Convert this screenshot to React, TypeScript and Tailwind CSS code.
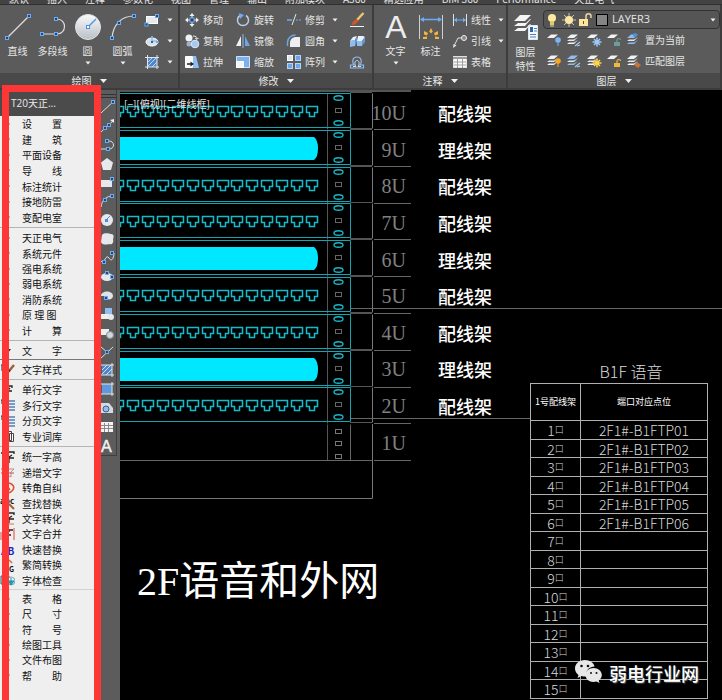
import type { ReactNode } from 'react';

const TABS = ['默认', '插入', '注释', '参数化', '视图', '管理', '输出', '附加模块', 'A360', '精选应用', 'BIM 360', 'Performance', '天正电气'];

interface MenuGroup {
  height: string;
  items: string[];
  marks?: string[];
  divider?: 'normal' | 'tight' | 'dark';
}

const MENU: MenuGroup[] = [
  { height: 'h-[109px]', items: ['设　　置', '建　　筑', '平面设备', '导　　线', '标注统计', '接地防雷', '变配电室'], divider: 'normal' },
  { height: 'h-[108px]', items: ['天正电气', '系统元件', '强电系统', '弱电系统', '消防系统', '原 理 图', '计　　算'], divider: 'normal' },
  { height: 'h-[15px]', items: ['文　　字'], marks: ['open'], divider: 'dark' },
  { height: 'h-4', items: ['文字样式'], marks: ['brush'], divider: 'normal' },
  { height: 'h-[62px]', items: ['单行文字', '多行文字', '分页文字', '专业词库'], marks: ['char', 'lines', 'lines', 'pages'], divider: 'normal' },
  {
    height: 'h-[139px]',
    items: ['统一字高', '递增文字', '转角自纠', '查找替换', '文字转化', '文字合并', '快速替换', '繁简转换', '字体检查'],
    marks: ['height', 'increase', 'rotate', 'find', 'convert', 'merge', 'replace', 'swap', 'check'],
    divider: 'tight',
  },
  { height: 'h-[92px]', items: ['表　　格', '尺　　寸', '符　　号', '绘图工具', '文件布图', '帮　　助'] },
];

type RowKind = 'ports' | 'bar' | 'empty';

const RACK: { unit: string; kind: RowKind; label: string }[] = [
  { unit: '10U', kind: 'ports', label: '配线架' },
  { unit: '9U', kind: 'bar', label: '理线架' },
  { unit: '8U', kind: 'ports', label: '配线架' },
  { unit: '7U', kind: 'ports', label: '配线架' },
  { unit: '6U', kind: 'bar', label: '理线架' },
  { unit: '5U', kind: 'ports', label: '配线架' },
  { unit: '4U', kind: 'ports', label: '配线架' },
  { unit: '3U', kind: 'bar', label: '理线架' },
  { unit: '2U', kind: 'ports', label: '配线架' },
  { unit: '1U', kind: 'empty', label: '' },
];

const PORTS = ['2F1#-B1FTP01', '2F1#-B1FTP02', '2F1#-B1FTP03', '2F1#-B1FTP04', '2F1#-B1FTP05', '2F1#-B1FTP06'];

/* ---------- icons ---------- */

const Dot = ({ x, y }: { x: number; y: number }) => (
  <rect x={x - 1.5} y={y - 1.5} width="3" height="3" fill="#24466f" stroke="#6cabf5" />
);

const Icon = ({ w = 16, h = 16, children }: { w?: number; h?: number; children: ReactNode }) => (
  <svg width={w} height={h} viewBox={`0 0 ${w} ${h}`} fill="none" className="shrink-0" aria-hidden="true">
    {children}
  </svg>
);

const Caret = () => (
  <svg width="6" height="4" viewBox="0 0 6 4" className="shrink-0" aria-hidden="true">
    <path d="M0.5 0.5h5L3 3.5z" fill="#f0f0f0" />
  </svg>
);

const LineIcon = () => (
  <Icon w={28} h={28}>
    <path d="M3 25L25 3" stroke="#dcdcdc" strokeWidth="1.2" />
    <Dot x={3} y={25} />
    <Dot x={25} y={3} />
  </Icon>
);

const PolylineIcon = () => (
  <Icon w={28} h={28}>
    <path d="M3 21h15c10 0 10-15 0-15" stroke="#dcdcdc" strokeWidth="1.2" />
    <Dot x={3} y={21} />
    <Dot x={17} y={21} />
    <Dot x={17} y={6} />
  </Icon>
);

const CircleIcon = () => (
  <Icon w={28} h={28}>
    <defs>
      <linearGradient id="disc" x1="0" y1="0" x2="0" y2="1">
        <stop offset="0" stopColor="#fafafa" />
        <stop offset="1" stopColor="#b9bfc8" />
      </linearGradient>
    </defs>
    <circle cx="14" cy="14" r="12.5" fill="url(#disc)" stroke="#e4e4e4" />
    <path d="M14 14l8-8" stroke="#4a90e2" strokeWidth="1.2" />
    <rect x="12.5" y="12.5" width="3" height="3" fill="#fff" stroke="#4a90e2" />
  </Icon>
);

const ArcIcon = () => (
  <Icon w={28} h={28}>
    <path d="M3 25C4 12 12 3 25 3" stroke="#dcdcdc" strokeWidth="1.2" />
    <Dot x={3} y={25} />
    <Dot x={10} y={10} />
    <Dot x={25} y={3} />
  </Icon>
);

const RectIcon = () => (
  <Icon>
    <rect x="2.5" y="4.5" width="11" height="7" fill="#e6e9ee" stroke="#fff" />
    <Dot x={2.5} y={12.5} />
    <Dot x={13} y={4} />
  </Icon>
);

const EllipseIcon = () => (
  <Icon>
    <ellipse cx="8" cy="9" rx="6" ry="4" fill="#d9dfe8" stroke="#fff" />
    <path d="M8 4v4h5" stroke="#6cabf5" />
    <rect x="7" y="8" width="2" height="2" fill="#2f62a8" />
    <rect x="7" y="3" width="2" height="2" fill="#6cabf5" />
    <rect x="12" y="8" width="2" height="2" fill="#6cabf5" />
  </Icon>
);

const HatchIcon = () => (
  <Icon>
    <rect x="4" y="4" width="9" height="9" fill="#4f86c8" />
    <path d="M4 8l4-4M4 12l8-8M8 13l5-5" stroke="#bcd8ff" />
    <path d="M3.5 1v14M13 1v14M1 3.5h14M1 13h14" stroke="#dfe6ef" />
  </Icon>
);

const MoveIcon = () => (
  <Icon>
    <path d="M8 1l2.5 3h-5zM8 15l2.5-3h-5zM1 8l3-2.5v5zM15 8l-3-2.5v5z" fill="#f2f2f2" />
    <path d="M8 3v10M3 8h10" stroke="#f2f2f2" />
    <rect x="6" y="6" width="4" height="4" fill="#24466f" stroke="#6cabf5" />
  </Icon>
);

const CopyIcon = () => (
  <Icon>
    <circle cx="5" cy="5" r="3.5" fill="#f0f2f5" />
    <circle cx="5" cy="11" r="2.5" fill="#9fb5cf" />
    <circle cx="11" cy="11" r="3.8" fill="#a8c8ee" stroke="#dceaff" />
    <path d="M9 3c3 0 4 1 4 3M11 5l2 1.5L14.500 5" stroke="#e8e8e8" />
  </Icon>
);

const StretchIcon = () => (
  <Icon>
    <path d="M9 2h3l3 12H9z" fill="#8fbdf0" />
    <path d="M1.5 2.5h7v11h-7z" fill="#fafafa" stroke="#fff" />
    <path d="M3 10h4" stroke="#222" strokeWidth="1.5" />
    <path d="M6.5 7.5L10 10l-3.500 2.5z" fill="#222" />
  </Icon>
);

const RotateIcon = () => (
  <Icon>
    <path d="M11 3.5A5.5 5.5 0 1 1 5 3.5" stroke="#b9cfe8" strokeWidth="1.5" />
    <path d="M4 1l5 2-4 4z" fill="#6cabf5" />
  </Icon>
);

const MirrorIcon = () => (
  <Icon>
    <path d="M6 3v10H1z" fill="#f2f2f2" />
    <path d="M10 3v10h5z" fill="#6ca6e6" />
    <path d="M8 1v14" stroke="#8fbdf0" />
  </Icon>
);

const ScaleIcon = () => (
  <Icon>
    <path d="M1.5 2.5h13v11h-13z" fill="#7eb1ec" stroke="#cfe2fa" />
    <path d="M1.5 7.5h7v6h-7z" fill="#f4f4f4" stroke="#fff" />
  </Icon>
);

const TrimIcon = () => (
  <Icon>
    <path d="M1 8h5" stroke="#6cabf5" strokeWidth="1.5" />
    <path d="M10 8h5" stroke="#6cabf5" strokeDasharray="2 1" />
    <path d="M6 13L10 2" stroke="#e6e6e6" />
  </Icon>
);

const FilletIcon = () => (
  <Icon>
    <path d="M4 14V10c0-4 3-6 6-6h4v10z" fill="#eceef2" />
    <path d="M1.5 13V9c1-5 4-7 8-7" stroke="#6ca6e6" strokeWidth="1.5" />
  </Icon>
);

const ArrayIcon = () => (
  <Icon>
    <rect x="1.5" y="1.5" width="5" height="5" fill="#dfe6f0" stroke="#fff" />
    <rect x="9.5" y="1.5" width="5" height="5" fill="#6ca6e6" stroke="#b5d3f8" />
    <rect x="1.5" y="9.5" width="5" height="5" fill="#6ca6e6" stroke="#b5d3f8" />
    <rect x="9.5" y="9.5" width="5" height="5" fill="#6ca6e6" stroke="#b5d3f8" />
  </Icon>
);

const EraseIcon = () => (
  <Icon>
    <path d="M14.5 1L8 8" stroke="#f0c46a" strokeWidth="2.5" />
    <path d="M8 7l1.5 2L6 12.500 2.500 13 4 9.500z" fill="#d9552a" />
    <path d="M1 14.5h14" stroke="#f0f0f0" />
  </Icon>
);

const ExplodeIcon = () => (
  <Icon>
    <path d="M1 8l5-1v6l-5 1zM8 8h5v5H8z" fill="#8fbdf0" />
    <path d="M1 8l3-4 4-1-2 4zM8 8l1-5h5l2 1-3 4z" fill="#e8f1fc" />
    <path d="M6 7l2-4v6l-2 4zM13 8l3-4v5l-3 4z" fill="#6897cc" />
  </Icon>
);

const OffsetIcon = () => (
  <Icon>
    <path d="M1.5 14h13v-3h-3.500c2-2 2-8-3-8s-5 6-3 8H1.500z" stroke="#8fbdf0" strokeWidth="1.2" />
    <path d="M4 12.5h3c-2-3-1-6 1-6s3 3 1 6h3" stroke="#cfe2fa" />
  </Icon>
);

const DimIcon = () => (
  <Icon w={26} h={28}>
    <path d="M1.5 2v24M24.500 2v24" stroke="#cfcfcf" />
    <path d="M3 6.5h20" stroke="#6cabf5" strokeWidth="1.5" />
    <path d="M2 6.5l4-2.500v5zM24 6.500L20 4v5z" fill="#6cabf5" />
    <path d="M13 15l1.800 3.500-1.800 2-1.800-2zM6 18l4 2-1 2.500-3-1zM20 18l-4 2 1 2.500 3-1zM5 24l4-.5v2.500H5zM21 24l-4-.5v2.500h4z" fill="#f3b63a" />
  </Icon>
);

const LinearIcon = () => (
  <Icon>
    <path d="M1.5 2v12M14.500 2v12" stroke="#e0e0e0" />
    <path d="M2 8h12" stroke="#6cabf5" />
    <path d="M2 8l3-2.500v5zM14 8l-3-2.500v5z" fill="#6cabf5" />
  </Icon>
);

const LeaderIcon = () => (
  <Icon>
    <path d="M2 13L6 5h4" stroke="#e0e0e0" />
    <path d="M1 15l.5-4 3 1.500z" fill="#e0e0e0" />
    <circle cx="12" cy="5" r="2.5" fill="#888" stroke="#f0f0f0" />
  </Icon>
);

const TableIcon = () => (
  <Icon>
    <rect x="1.5" y="2.5" width="13" height="11" fill="#fafafa" stroke="#e0e0e0" />
    <path d="M1 4h14" stroke="#9a9a9a" strokeWidth="2" />
    <path d="M5.5 4v10M10.500 4v10M2 8h12M2 11h12" stroke="#a0a0a0" />
  </Icon>
);

const LayersIcon = () => (
  <Icon w={26} h={28}>
    <path d="M1 8l6-6h11l-6 6zM1 13l4-3h8l4-4h1l-6 7zM1 18l4-3h8l4-4h1l-6 7z" fill="#f4f4f4" />
    <path d="M15.5 12.500h9v14h-9z" fill="#f6f8fb" stroke="#e0e6ee" />
    <path d="M17 14h3v5h-3z" fill="#2f62a8" />
    <path d="M21 15.500h3M21 18h3M17 21.500h6M17 24h6" stroke="#4d7fc0" />
  </Icon>
);

/* sheet stack with a badge in the lower right corner */
const LayerTool = ({ sheets, fill = '#f2f2f2', badge }: { sheets: number; fill?: string; badge: ReactNode }) => (
  <Icon>
    <path d="M1 6l4-3.5h7L8 6z" fill={fill} />
    {sheets > 1 && <path d="M1 9l2-1.500h5L12 5 8 9z" fill="#e4e8ee" />}
    {sheets > 1 && <path d="M1 12l2-1.500h5L12 8l-4 4z" fill={fill} />}
    {badge}
  </Icon>
);

const Pin = ({ c }: { c: string }) => (
  <>
    <circle cx="12" cy="8" r="2.8" fill={c} />
    <path d="M12 10v4" stroke={c} />
  </>
);

const Burst = ({ c }: { c: string }) => (
  <>
    <path d="M11 5.5v9M6.500 10h9M8 7l6 6M14 7l-6 6" stroke={c} strokeWidth="1.5" />
    <circle cx="11" cy="10" r="2" fill={c} />
  </>
);

const Lock = ({ c }: { c: string }) => (
  <>
    <rect x="8" y="10" width="6" height="4" fill={c} />
    <path d="M11 10V8c0-2 3.500-2 3.500 0" stroke={c} strokeWidth="1.2" />
  </>
);

const Slash = () => <path d="M9 14l5-4M11 14l3-1" stroke="#a9c9f2" strokeWidth="1.2" />;

/* ---------- ribbon ---------- */

const BigButton = ({ icon, label, caret }: { icon: ReactNode; label: string; caret?: boolean }) => (
  <button type="button" className="flex w-[35px] shrink-0 flex-col items-center pt-1">
    <span className="flex h-7 items-center">{icon}</span>
    <span className="mt-1 leading-3 whitespace-nowrap">{label}</span>
    {caret && <span className="mt-1"><Caret /></span>}
  </button>
);

const SmallButton = ({ icon, label, caret }: { icon: ReactNode; label?: string; caret?: boolean }) => (
  <button type="button" className="flex h-[21px] items-center gap-[3px] whitespace-nowrap">
    {icon}
    {label && <span>{label}</span>}
    {caret && <span className="ml-1"><Caret /></span>}
  </button>
);

const Panel = ({ title, className, children }: { title: string; className: string; children: ReactNode }) => (
  <section className={`flex flex-col border-r-2 border-[#3c3c3c] bg-[#5b5b5b] ${className}`}>
    <div className="flex flex-1 pt-1">{children}</div>
    <button type="button" className="flex h-[15px] items-center justify-center gap-2 bg-[#494949]">
      {title}
      <svg width="7" height="4" viewBox="0 0 7 4" aria-hidden="true"><path d="M0 0h7L3.5 4z" fill="#f0f0f0" /></svg>
    </button>
  </section>
);

const Ribbon = () => (
  <header className="h-[90px] shrink-0 overflow-hidden bg-[#3c3c3c] text-[10px] text-[#e6e6e6]">
    <nav className="flex h-[5px] items-end gap-[18px] overflow-hidden border-b border-[#303030] bg-[#434343] pl-[9px]">
      {TABS.map((tab) => (
        <button key={tab} type="button" className="shrink-0 leading-[11px] whitespace-nowrap">{tab}</button>
      ))}
    </nav>
    <div className="flex h-[83px]">
      <Panel title="绘图" className="w-[180px]">
        <BigButton icon={<LineIcon />} label="直线" />
        <BigButton icon={<PolylineIcon />} label="多段线" />
        <BigButton icon={<CircleIcon />} label="圆" caret />
        <BigButton icon={<ArcIcon />} label="圆弧" caret />
        <div className="ml-1">
          <SmallButton icon={<RectIcon />} caret />
          <SmallButton icon={<EllipseIcon />} caret />
          <SmallButton icon={<HatchIcon />} caret />
        </div>
      </Panel>
      <Panel title="修改" className="w-[194px]">
        <div className="ml-1 w-[51px]">
          <SmallButton icon={<MoveIcon />} label="移动" />
          <SmallButton icon={<CopyIcon />} label="复制" />
          <SmallButton icon={<StretchIcon />} label="拉伸" />
        </div>
        <div className="w-[51px]">
          <SmallButton icon={<RotateIcon />} label="旋转" />
          <SmallButton icon={<MirrorIcon />} label="镜像" />
          <SmallButton icon={<ScaleIcon />} label="缩放" />
        </div>
        <div className="w-[63px]">
          <SmallButton icon={<TrimIcon />} label="修剪" caret />
          <SmallButton icon={<FilletIcon />} label="圆角" caret />
          <SmallButton icon={<ArrayIcon />} label="阵列" caret />
        </div>
        <div>
          <SmallButton icon={<EraseIcon />} />
          <SmallButton icon={<ExplodeIcon />} />
          <SmallButton icon={<OffsetIcon />} />
        </div>
      </Panel>
      <Panel title="注释" className="w-[134px]">
        <div className="ml-1 flex">
          <BigButton
            icon={
              <Icon w={28} h={28}>
                <text x="14" y="25" textAnchor="middle" fontSize="32" fontFamily="Liberation Sans" fill="#ececec">A</text>
              </Icon>
            }
            label="文字"
            caret
          />
          <BigButton icon={<DimIcon />} label="标注" />
        </div>
        <div className="ml-1">
          <SmallButton icon={<LinearIcon />} label="线性" caret />
          <SmallButton icon={<LeaderIcon />} label="引线" caret />
          <SmallButton icon={<TableIcon />} label="表格" />
        </div>
      </Panel>
      <Panel title="图层" className="min-w-[214px] flex-1">
        <button type="button" className="flex w-[35px] shrink-0 flex-col items-center pt-1">
          <LayersIcon />
          <span className="mt-1 w-5 leading-[14px]">图层特性</span>
        </button>
        <div className="flex-1">
          <div className="relative mt-px h-[19px]">
            <select aria-label="图层" className="h-full w-full appearance-none rounded-sm border border-[#333] bg-[#555] pl-[68px] font-['Open_Sans','Noto_Sans',sans-serif] text-[11px] text-[#e6e6e6]">
              <option>LAYER3</option>
            </select>
            <div className="pointer-events-none absolute inset-0 flex items-center gap-px pr-1 pl-px">
              <Icon>
                <circle cx="8" cy="6" r="4" fill="#ffe9a0" />
                <path d="M6 9h4v4H6z" fill="#e8c860" />
                <path d="M6 14h4" stroke="#ddd" />
              </Icon>
              <Icon>
                <path d="M8 1v14M1 8h14M3 3l10 10M13 3L3 13" stroke="#c9c3b0" />
                <circle cx="8" cy="8" r="4" fill="#ffe7a6" />
              </Icon>
              <Icon>
                <rect x="1" y="7" width="9" height="7" fill="#ffe49a" />
                <path d="M8 7V4c0-3 5-3 5 0v2" stroke="#e8d8a8" strokeWidth="1.5" />
                <path d="M5.5 9v3" stroke="#555" />
              </Icon>
              <span className="ml-px size-3 border border-black bg-[#858585]" />
              <span className="ml-auto"><Caret /></span>
            </div>
          </div>
          <div className="flex h-[21px] items-center gap-1 pl-[3px]">
            <LayerTool sheets={1} badge={<Pin c="#7db5f5" />} />
            <LayerTool sheets={2} badge={<Slash />} />
            <LayerTool sheets={1} badge={<Burst c="#9cc8f8" />} />
            <LayerTool sheets={1} badge={<Lock c="#6d9d98" />} />
            <SmallButton icon={<LayerTool sheets={2} fill="#8fbdf0" badge={<circle cx="9" cy="3" r="2" fill="#4a90e2" />} />} label="置为当前" />
          </div>
          <div className="flex h-[21px] items-center gap-1 pl-[3px]">
            <LayerTool sheets={2} badge={<Pin c="#f5a623" />} />
            <LayerTool sheets={2} fill="#8fbdf0" badge={<Slash />} />
            <LayerTool sheets={2} badge={<Burst c="#ffd34d" />} />
            <LayerTool sheets={1} badge={<Lock c="#f0b93a" />} />
            <SmallButton icon={<LayerTool sheets={2} badge={<path d="M8 12l3-3 4 3-3 3z" fill="#c8733a" />} />} label="匹配图层" />
          </div>
        </div>
      </Panel>
    </div>
  </header>
);

/* ---------- screen menu ---------- */

const MARKS: Record<string, ReactNode> = {
  open: <path d="M5 5h6l-3 4z" fill="#222" />,
  brush: (
    <>
      <path d="M1 3h3M2 3v6" stroke="#222" />
      <path d="M14 3L9 9" stroke="#9a6238" strokeWidth="2.5" />
      <path d="M10 8l-3 4" stroke="#333" strokeWidth="1.5" />
    </>
  ),
  char: <path d="M5 3h7v2M10 5L8 7v5M6 8h6" stroke="#222" strokeWidth="1.3" />,
  lines: (
    <>
      <path d="M1 2h3M2 2v4" stroke="#222" />
      <path d="M6 3h9M6 6h9M6 9h9M6 12h9" stroke="#4d83b5" strokeWidth="1.5" />
    </>
  ),
  pages: <path d="M7.5 2.500h4v9h-4zM9.500 4.500h4v8h-4z" fill="#fff" stroke="#4a4046" />,
  height: <path d="M1 3h3M5 2h9v2M12 5L9 7v6M5 8h9M3 12h5" stroke="#222" strokeWidth="1.3" />,
  increase: (
    <>
      <path d="M8 4h6l-3 3v5l-2-1" stroke="#999" />
      <path d="M1 4h4M1 8h13" stroke="#d84a2c" />
    </>
  ),
  rotate: <path d="M4 3c8-3 12 3 8 7-2 2-4 2-6 1M7 5l3 4" stroke="#d8502c" strokeWidth="1.5" />,
  find: (
    <>
      <text x="0" y="8" fontSize="8" fontWeight="700" fill="#111">abc</text>
      <path d="M9 8l5 5" stroke="#9a6238" strokeWidth="2" />
    </>
  ),
  convert: (
    <>
      <path d="M4 2h10v2M12 5L9 7v5M5 8h9" stroke="#222" strokeWidth="1.3" />
      <path d="M6 13h8" stroke="#d8762c" />
    </>
  ),
  merge: (
    <>
      <path d="M2 3h7v2M4 8h7M7 5v8M8 3h5" stroke="#222" strokeWidth="1.3" />
      <path d="M14 1v12M1 5v8" stroke="#d84a4a" />
    </>
  ),
  replace: <text x="1" y="13" fontSize="10" fontWeight="700" fill="#1c1cc8">AB</text>,
  swap: (
    <>
      <path d="M2 2c4-1 8 0 10 3M3 7h5" stroke="#d86a2c" strokeWidth="1.5" />
      <text x="2" y="14" fontSize="7" fontWeight="700" fill="#111">BIG</text>
    </>
  ),
  check: (
    <>
      <path d="M1 3h8v8H1z" fill="#cfd6dd" stroke="#555" />
      <circle cx="11" cy="8" r="4" fill="#e2f4f8" stroke="#7ab" />
      <path d="M11 5v5M8 8l3 4 3-4z" stroke="#1593a8" fill="#18a8c0" />
    </>
  ),
};

const DIVIDERS = {
  normal: 'my-0.5 h-px bg-[#b4b4b4]',
  tight: 'my-px h-px bg-[#d2d2d2]',
  dark: 'my-px h-px bg-[#777]',
};

const ScreenMenu = () => (
  <aside className="w-[96px] shrink-0 bg-[#efefef] text-[10px] text-[#111]">
    <h2 className="flex h-[26px] items-center bg-[#4b4b4b] pl-[11px] font-['Open_Sans','Noto_Sans_CJK_SC',sans-serif] text-[#e8e8e8]">T20天正...</h2>
    <div>
      {MENU.map((group) => (
        <div key={group.items[0]}>
          <ul className={`grid auto-rows-fr ${group.height}`}>
            {group.items.map((item, index) => (
              <li key={item} className="flex min-h-0 items-center">
                <button type="button" className="flex h-full w-full items-center whitespace-pre">
                  <svg width="15" height="14" viewBox="0 0 15 14" fill="none" className="mr-[7px] shrink-0" aria-hidden="true">
                    {group.marks ? MARKS[group.marks[index]] : <path d="M9 7h1" stroke="#777" />}
                  </svg>
                  {item}
                </button>
              </li>
            ))}
          </ul>
          {group.divider && <div className={DIVIDERS[group.divider]} />}
        </div>
      ))}
    </div>
  </aside>
);

/* ---------- draw toolbar ---------- */

const TOOLS: { name: string; art: ReactNode }[] = [
  { name: '直线', art: <><path d="M1 14L14 2" stroke="#dcdcdc" /><Dot x={13} y={3} /></> },
  { name: '构造线', art: <><path d="M1 14L14 2" stroke="#dcdcdc" /><path d="M14 1v4l-4-3z" fill="#eee" /><Dot x={5} y={10} /><Dot x={9} y={7} /></> },
  { name: '多段线', art: <><path d="M1 12h8c6 0 6-8 0-8H7" stroke="#dcdcdc" /><Dot x={8} y={12} /><Dot x={7} y={4} /></> },
  { name: '多边形', art: <path d="M7 2l6 4.500L11 14H3L1 6.500z" fill="#e6e8ec" /> },
  { name: '矩形', art: <><rect x="0" y="5" width="12" height="7" fill="#e6e8ec" /><Dot x={12} y={4} /></> },
  { name: '圆弧', art: <><path d="M1 14C2 7 6 3 13 3" stroke="#dcdcdc" /><Dot x={5} y={7} /><Dot x={12} y={3} /></> },
  { name: '圆', art: <><circle cx="7" cy="8" r="6" fill="#e6e8ec" /><path d="M6 8l4-4" stroke="#4a90e2" /><rect x="5" y="7" width="3" height="3" fill="#4a90e2" /></> },
  { name: '修订云线', art: <path d="M2 4c3-3 7-1 9-1 3 0 3 3 2 5 1 4-1 6-4 5-3 1-7 1-8-2z" fill="#e6e8ec" /> },
  { name: '样条曲线', art: <><path d="M1 11c3 4 5-8 8-3s5-1 5-5" stroke="#dcdcdc" /><Dot x={4} y={12} /><Dot x={12} y={3} /></> },
  { name: '椭圆', art: <><ellipse cx="7" cy="9" rx="6" ry="4" fill="#e6e8ec" /><Dot x={7} y={5} /><Dot x={12} y={9} /></> },
  { name: '椭圆弧', art: <><path d="M1 9c0-6 12-6 12 0 0 3-4 4-5 3V9z" fill="#dfe4ea" /><Dot x={6} y={11} /></> },
  { name: '插入块', art: <><rect x="5" y="2" width="7" height="7" fill="#8fbdf0" /><rect x="1" y="8" width="8" height="5" fill="#eee" /><circle cx="11" cy="11" r="3" fill="#e6e8ec" /></> },
  { name: '创建块', art: <><rect x="0" y="4" width="9" height="6" fill="#eee" /><circle cx="10" cy="10" r="3.5" fill="#cfd8e2" stroke="#888" /></> },
  { name: '点', art: <><path d="M1 3l6 5M13 3L1 14" stroke="#dcdcdc" /><Dot x={7} y={8} /></> },
  { name: '图案填充', art: <><rect x="2" y="3" width="10" height="10" fill="#4f86c8" /><path d="M2 8l5-5M2 12l9-9M6 13l6-6" stroke="#cfe2fa" /><path d="M0 3h14M0 13h14M12 1v14" stroke="#e4e4e4" /></> },
  { name: '渐变色', art: <><rect x="2" y="3" width="10" height="10" fill="#5f98dc" /><path d="M0 3h14M0 13h14M12 1v14" stroke="#e4e4e4" /></> },
  { name: '面域', art: <><path d="M0 3h9l4 5v5H0z" fill="#d5dae0" /><circle cx="6" cy="9" r="3" fill="#8fbdf0" stroke="#3c5f8a" /></> },
  { name: '表格', art: <><rect x="0" y="3" width="13" height="10" fill="#f4f4f4" /><path d="M0 6.500h13M0 9.500h13M4.500 4v9M8.500 4v9" stroke="#8a8a8a" /></> },
  { name: '多行文字', art: <text x="1" y="14" fontSize="16" fontFamily="Liberation Sans" stroke="#f0f0f0" strokeWidth="0.5" fill="#f0f0f0">A</text> },
];

const DrawToolbar = () => (
  <div className="w-6 shrink-0 bg-[#5c5c5c]">
    <div className="w-[21px] border-r border-b border-[#3f3f3f] pt-1">
      <div className="ml-1 h-1 border-y border-[#333]" />
      <div className="grid h-[357px] auto-rows-fr">
        {TOOLS.map((tool) => (
          <button key={tool.name} type="button" aria-label={tool.name} className="flex min-h-0 items-center pl-1">
            <Icon w={15}>{tool.art}</Icon>
          </button>
        ))}
      </div>
    </div>
  </div>
);

/* ---------- drawing ---------- */

const PORT_COLUMNS = Array.from({ length: 14 }, (_, i) => 186 - Math.round(i * 14.9));

const RackUnit = ({ y, kind }: { y: number; kind: RowKind }) => (
  <g transform={`translate(0 ${y})`}>
    <path d="M252.5 0V35" stroke="#7a7a7a" />
    <path d="M207.5 0V36" stroke="#555" />
    <path d="M254 36h37" stroke="#666" />
    {kind === 'empty' ? (
      <>
        <path d="M230.5 0V36M0 36h252" stroke="#666" />
        {[5, 17, 30].map((top) => (
          <rect key={top} x="215.5" y={top} width="6" height="4" stroke="#777" />
        ))}
      </>
    ) : (
      <>
        <path d="M0 0H230.5V34H0" stroke="#12a6b5" />
        <path d="M230 -1h22M230 35h22" stroke="#555" />
        <rect x="215.5" y="15" width="6" height="4" stroke="#666" />
        <ellipse cx="218.5" cy="4.5" rx="4.5" ry="2.3" stroke="#18b4c4" strokeWidth="1.4" />
        <ellipse cx="218.5" cy="29.5" rx="4.5" ry="2.3" stroke="#18b4c4" strokeWidth="1.4" />
      </>
    )}
    {kind === 'bar' && <path d="M0 6.5h194q4 3 4 11.500t-4 11.500H0z" fill="#00e8ff" />}
    {kind === 'ports' &&
      PORT_COLUMNS.map((x) => (
        <path key={x} d={`M${x + 0.5} 13h11v6h-3v4h-5v-4h-3z`} stroke="#14bccb" strokeWidth="1.5" />
      ))}
  </g>
);

const PortTable = () => (
  <table className="absolute top-[270px] left-[410px] w-[178px] table-fixed border-collapse text-center font-['Noto_Sans_CJK_SC',sans-serif] font-light text-[#d8d8d8]">
    <caption className="h-[23px] pl-6 text-base leading-[23px]">B1F 语音</caption>
    <colgroup>
      <col className="w-[50px]" />
      <col />
    </colgroup>
    <thead>
      <tr className="h-[37px] text-[9px] text-white">
        <th className="border border-[#b0b0b0] font-normal">1号配线架</th>
        <th className="border border-[#b0b0b0] font-normal">端口对应点位</th>
      </tr>
    </thead>
    <tbody>
      {Array.from({ length: 15 }, (_, i) => (
        <tr key={i} className="h-[18px] odd:h-[19px]">
          <td className="border border-[#b0b0b0] text-sm leading-[14px]">
            <div className="flex items-center justify-center">
              {i + 1}
              <span className="text-[9px]">口</span>
            </div>
          </td>
          <td className="border border-[#b0b0b0] text-sm leading-[14px]">{PORTS[i]}</td>
        </tr>
      ))}
    </tbody>
  </table>
);

const Watermark = () => (
  <div className="absolute top-[570px] left-[455px] flex items-center gap-[7px] text-white">
    <svg width="27" height="25" viewBox="0 0 27 25" aria-hidden="true">
      <path d="M10 0C4 0 0 4 0 8.500c0 3 1.500 5 3.500 6.500L2.500 18l4-2c2 .6 4 .6 5 .4C10 10 15 6.500 19.500 6.500 19 3 15 0 10 0z" fill="#e8e8e8" />
      <path d="M18.5 8C14 8 10.500 11 10.500 15s3.500 7 8 7c1 0 2-.2 3-.5l3 1.500-.8-2.500c2-1.500 3.100-3.300 3.100-5.500 0-4-3.800-7-8.300-7z" fill="#e8e8e8" />
      <g fill="#111">
        <circle cx="6.5" cy="6" r="1.3" />
        <circle cx="13" cy="6" r="1.3" />
        <circle cx="16" cy="13" r="1" />
        <circle cx="21.5" cy="13" r="1" />
      </g>
    </svg>
    <span className="text-lg leading-6 font-medium whitespace-nowrap [text-shadow:1px_1px_1px_#555]">弱电行业网</span>
  </div>
);

const Drawing = () => (
  <main className="relative min-w-0 flex-1 overflow-hidden bg-black">
    <svg width="602" height="610" viewBox="0 0 602 610" fill="none" className="overflow-visible" aria-hidden="true">
      {RACK.map((row, i) => (
        <RackUnit key={row.unit} y={Math.round(3 + i * 36.8) + 0.5} kind={row.kind} />
      ))}
      <path d="M0 408.5h252.500V334" stroke="#777" />
      <path d="M231 218.5H2000M231 328.500h179" stroke="#666" />
      <path d="M0 1h291" stroke="#555" strokeWidth="2" />
    </svg>
    <p className="absolute top-[6px] left-1 text-[10px] leading-4 text-[#e8e8e8]">[−][俯视][二维线框]</p>
    <ul className="absolute top-[5px] left-[251px] grid h-[366px] auto-rows-fr">
      {RACK.map((row) => (
        <li key={row.unit} className="flex min-h-0 items-center gap-8">
          <span className="w-[35px] text-right font-['Liberation_Serif',serif] text-xl text-[#808080]">{row.unit}</span>
          <span className="text-lg font-medium text-white">{row.label}</span>
        </li>
      ))}
    </ul>
    <h1 className="absolute top-[464px] left-[17px] font-['Liberation_Serif','Noto_Sans_CJK_SC',serif] text-[40px] leading-[56px] whitespace-nowrap text-white">2F语音和外网</h1>
    <PortTable />
    <Watermark />
  </main>
);

const App = () => (
  <div className="flex h-screen flex-col overflow-hidden bg-[#5c5c5c] font-['Noto_Sans_CJK_SC',sans-serif]">
    <Ribbon />
    <div className="relative flex min-h-0 flex-1">
      <ScreenMenu />
      <DrawToolbar />
      <Drawing />
      {/* Highlight around the screen menu */}
      <div className="pointer-events-none absolute -top-[5px] -bottom-2 left-[2px] w-[99px] border-[7px] border-[#ff3636]" />
    </div>
  </div>
);

export default App;
